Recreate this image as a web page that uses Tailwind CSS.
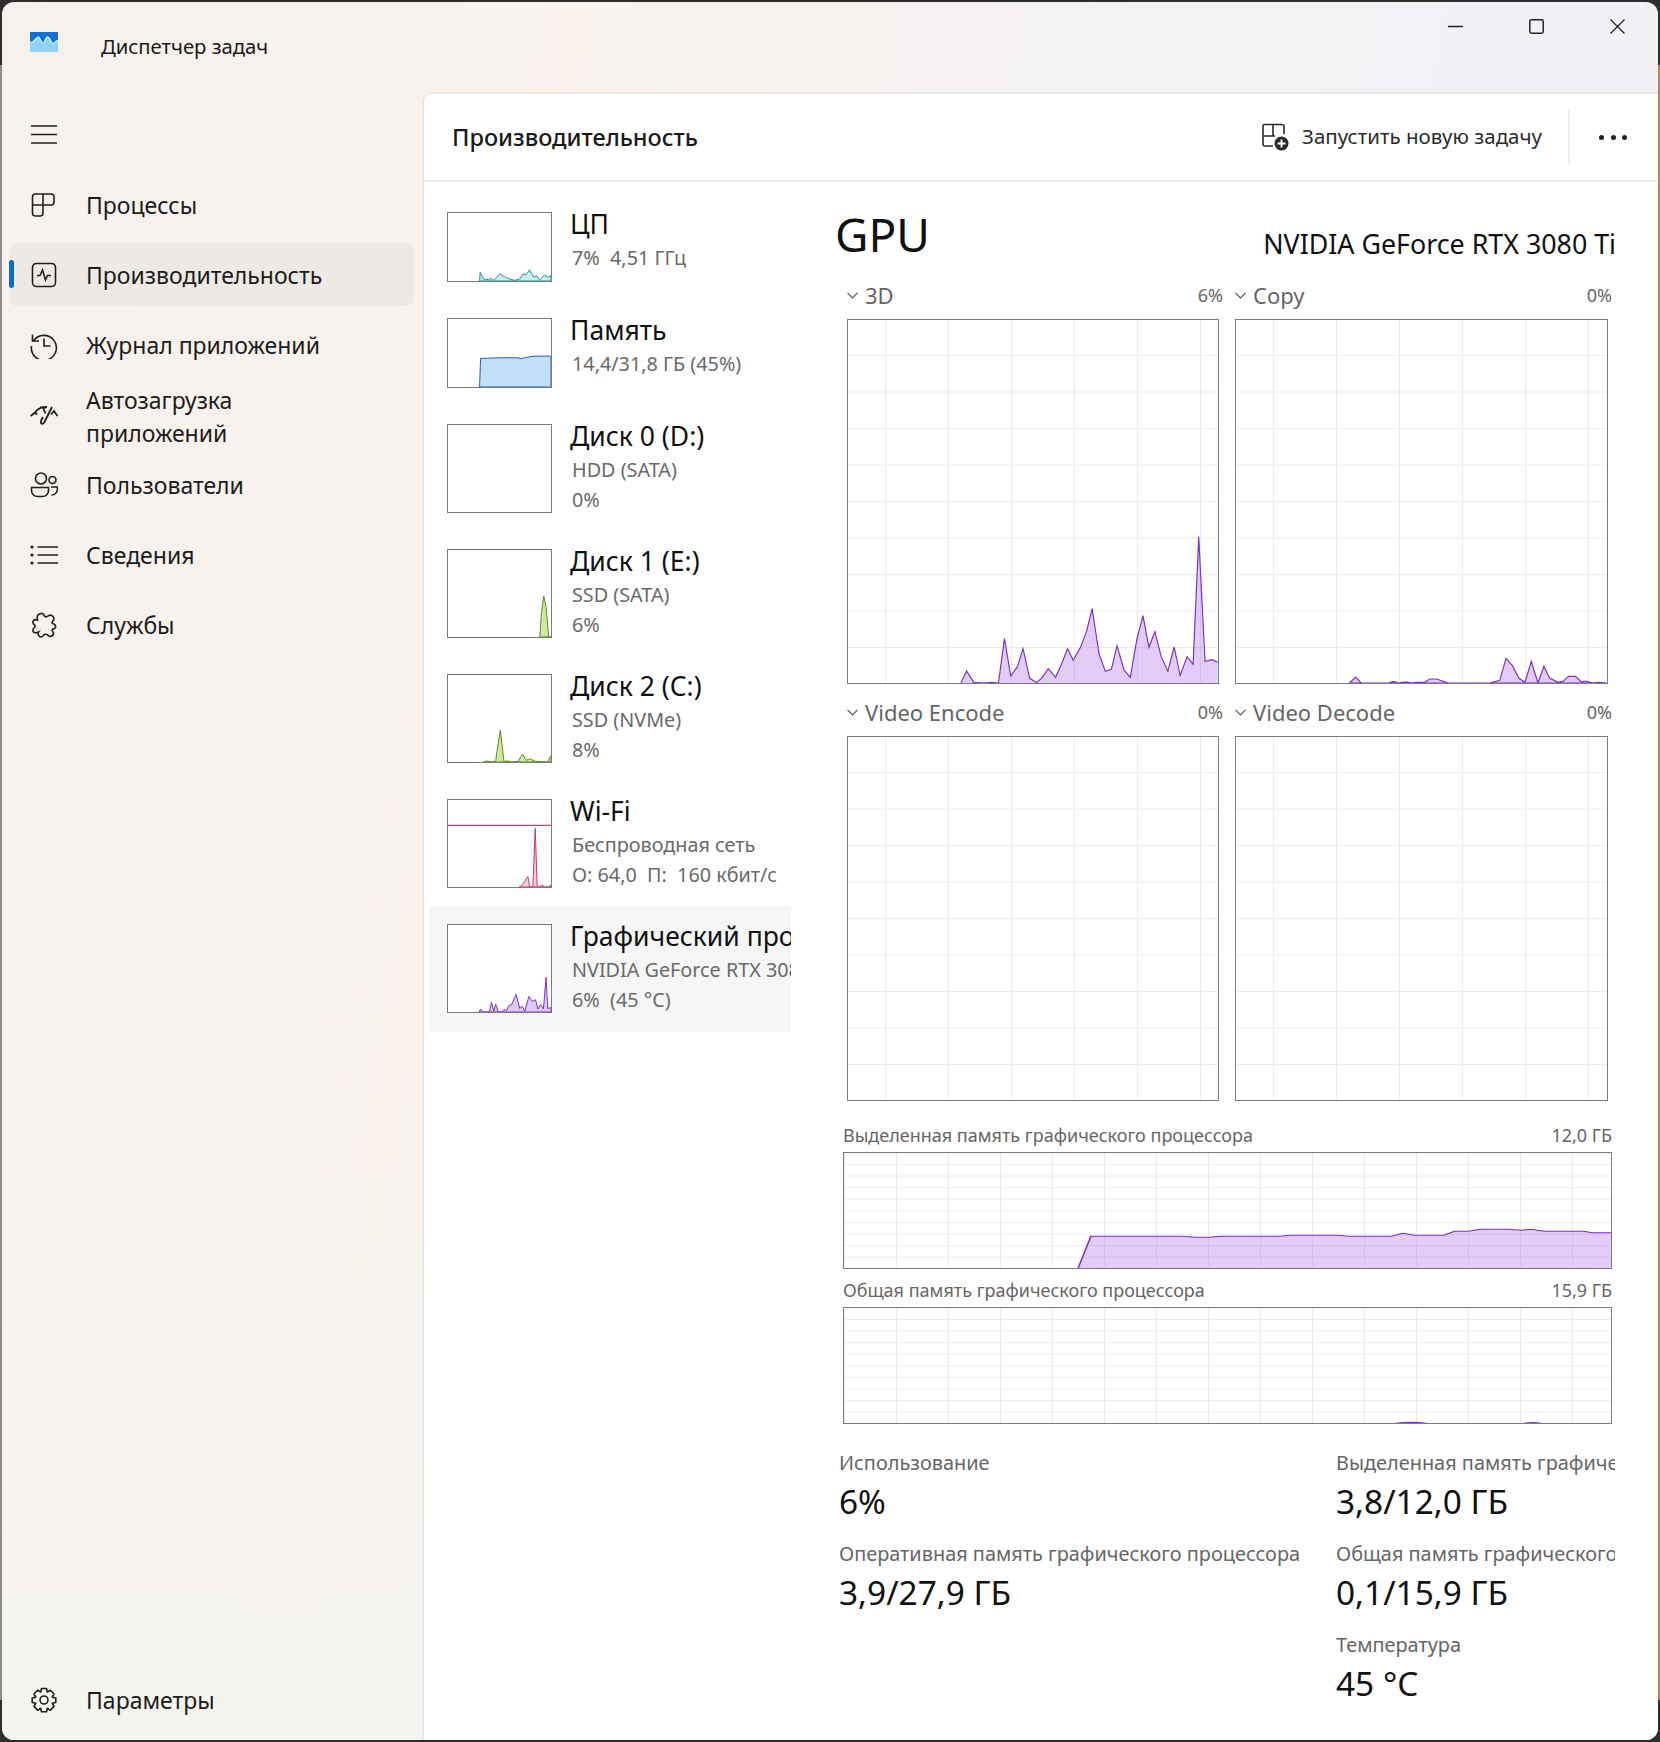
<!DOCTYPE html>
<html lang="ru">
<head>
  <meta charset="UTF-8" />
  <title>Диспетчер задач</title>
  <script src="https://cdn.jsdelivr.net/npm/@tailwindcss/browser@4"></script>
</head>
<body class="w-[1660px] h-[1742px] overflow-hidden bg-[linear-gradient(#2e2e2e_65px,transparent_65px,transparent_1700px,#2e2e2e_1700px),linear-gradient(90deg,#8f8d8b_50%,#b5834f_50%)] font-['Noto_Sans','Open_Sans',sans-serif]">

<div class="m-[2px] w-[1656px] h-[1738px] rounded-[12px] overflow-hidden flex flex-col bg-[linear-gradient(100deg,#f7f1ee_0%,#f9f2ed_30%,#f3f1f3_60%,#eff0f7_100%)]">

  <!-- Title bar -->
  <div class="h-[90px] shrink-0 flex items-start relative">
    <svg class="mt-[30px] ml-[28px] w-[28px] h-[20px]" viewBox="0 0 28 20">
      <rect width="28" height="20" fill="#8fd3f7"/>
      <path d="M0 0H28V9C26 7 24.500 13 22 11C20 8 19 4 17 5C15 6 15 11 13 11C11 11 10 4 8 5C5 6 3 12 0 10Z" fill="#0f6fd6"/>
      <path d="M0 10C3 12 5 6 8 5C10 4 11 11 13 11C15 11 15 6 17 5C19 4 20 8 22 11C24.500 13 26 7 28 9" fill="none" stroke="#d8f0ff" stroke-width="1.200"/>
    </svg>
    <span class="ml-[43px] mt-[30px] text-[20.25px] leading-[28px] text-[#1a1a1a]">Диспетчер задач</span>
    <div class="ml-auto flex items-center gap-[66px] mt-[17px] mr-[33px]">
      <svg class="w-[15px] h-[15px]" viewBox="0 0 15 15"><path d="M0 7.500H15" stroke="#222" stroke-width="1.300"/></svg>
      <svg class="w-[15px] h-[15px]" viewBox="0 0 15 15"><rect x="0.800" y="0.800" width="13.400" height="13.400" rx="1.600" fill="none" stroke="#222" stroke-width="1.500"/></svg>
      <svg class="w-[15px] h-[15px]" viewBox="0 0 15 15"><path d="M0.500 0.500L14.500 14.500M14.500 0.500L0.500 14.500" stroke="#222" stroke-width="1.300"/></svg>
    </div>
  </div>

  <div class="flex-1 flex min-h-0">

    <!-- Sidebar -->
    <aside class="w-[420px] shrink-0 flex flex-col text-[#1c1c1c] text-[23px] bg-[linear-gradient(180deg,transparent_65%,#f5f4ee)]">
      <div class="h-[78px] pt-[6px] flex items-center pl-[29px]">
        <svg class="w-[26px] h-[20px]" viewBox="0 0 26 20"><path d="M0 2H26M0 10.500H26M0 19H26" stroke="#222" stroke-width="1.500"/></svg>
      </div>

      <a class="h-[70px] flex items-center pl-[28px] gap-[28px]">
        <svg class="w-[28px] h-[28px] shrink-0" viewBox="0 0 28 28" fill="none" stroke="#1f1f1f" stroke-width="1.600"><path d="M2.500 14H13V3H5.500Q2.500 3 2.500 6V22Q2.500 25 5.500 25H10Q13 25 13 22V3M13 14H21Q24 14 24 11V6Q24 3 21 3H13"/></svg>
        <span>Процессы</span>
      </a>

      <a class="relative ml-[7px] mr-[8px] h-[70px] flex items-center pl-[21px] gap-[28px]">
        <span class="absolute inset-x-0 top-[3px] h-[63px] rounded-[8px] bg-[#efe9e6]"></span>
        <span class="absolute left-0 top-[20px] w-[5px] h-[28px] rounded-full bg-[#0f6cbd]"></span>
        <svg class="relative w-[28px] h-[28px] shrink-0" viewBox="0 0 28 28" fill="none" stroke="#1f1f1f" stroke-width="1.600"><rect x="2.500" y="2.500" width="23" height="23" rx="4"/><path d="M7 14.500H10L12.500 9L15.500 19L17.500 14.500H21"/></svg>
        <span class="relative">Производительность</span>
      </a>

      <a class="h-[70px] flex items-center pl-[28px] gap-[28px]">
        <svg class="w-[28px] h-[28px] shrink-0" viewBox="0 0 28 28" fill="none" stroke="#1f1f1f" stroke-width="1.600"><path d="M2.500 3.500V10H9"/><path d="M3.400 10A12.500 12.500 0 1 1 1.500 15"/><path d="M14 7.500V15H20.500"/></svg>
        <span>Журнал приложений</span>
      </a>

      <a class="h-[70px] flex items-center pl-[28px] gap-[28px]">
        <svg class="w-[28px] h-[28px] shrink-0" viewBox="0 0 28 28" fill="none" stroke="#1f1f1f" stroke-width="1.800"><path d="M0.700 15L5 11.500L7 13.500M5 11.500A14 14 0 0 1 17 6M10 6.500H16M13 6.500L15.500 12.500"/><path d="M22 6L14.500 21Q12.500 24 11 22Q10.500 20 13 16"/><path d="M21 13.500L24 10L27.500 15"/></svg>
        <span class="mt-[4px] leading-[33px]">Автозагрузка<br>приложений</span>
      </a>

      <a class="h-[70px] flex items-center pl-[28px] gap-[28px]">
        <svg class="w-[28px] h-[28px] shrink-0" viewBox="0 0 28 28" fill="none" stroke="#1f1f1f" stroke-width="1.600"><circle cx="11" cy="7.500" r="5.500"/><circle cx="22.500" cy="9" r="3.500"/><path d="M1.500 16.500H18.500V19.500A6 6 0 0 1 12.500 25.500H7.500A6 6 0 0 1 1.500 19.500Z"/><path d="M21 16H27.500V18A6 6 0 0 1 21.500 24"/></svg>
        <span>Пользователи</span>
      </a>

      <a class="h-[70px] flex items-center pl-[28px] gap-[28px]">
        <svg class="w-[28px] h-[28px] shrink-0" viewBox="0 0 28 28" fill="none" stroke="#1f1f1f" stroke-width="1.600"><path d="M7.500 6H28M7.500 14H28M7.500 22H28"/><g fill="#1f1f1f" stroke="none"><circle cx="2" cy="6" r="1.600"/><circle cx="2" cy="14" r="1.600"/><circle cx="2" cy="22" r="1.600"/></g></svg>
        <span>Сведения</span>
      </a>

      <a class="h-[70px] flex items-center pl-[28px] gap-[28px]">
        <svg class="w-[28px] h-[28px] shrink-0" viewBox="0 0 28 28" fill="none" stroke="#1f1f1f" stroke-width="1.600"><path d="M11 2.500Q13.500 2 14 4.500Q15.500 7 18 5Q21 3 23 5.500Q25 8 22.500 10.500Q21 12.500 24 13Q26 14 25.500 16.500Q24.500 18.500 22.500 18Q21.500 20 23.500 22Q23.500 25 20.500 25.500Q18.500 25.500 17 23.500Q14 22.500 13 25Q11 27 9 25Q7.500 22.500 8.500 21Q5.500 22.500 3.500 21Q2 18.500 4.500 16.500Q6 15 4 13.500Q2 11.500 3.500 9.500Q5.500 8 7.500 9Q6.500 5 8.500 3.500Z"/></svg>
        <span>Службы</span>
      </a>

      <a class="mt-auto mb-[5px] h-[70px] flex items-center pl-[28px] gap-[28px]">
        <svg class="w-[28px] h-[28px] shrink-0" viewBox="0 0 28 28" fill="none" stroke="#1f1f1f" stroke-width="1.600"><circle cx="14" cy="14" r="4"/><path d="M11.500 2.500H16.500L17.200 6L20.400 4.300L24 8L22.200 11.200L25.800 12V16.500L22.200 17.200L24 20.400L20.400 24.200L17.200 22.300L16.500 25.800H11.500L10.800 22.300L7.600 24.200L4 20.400L5.800 17.200L2.200 16.500V12L5.800 11.200L4 8L7.600 4.300L10.800 6Z" stroke-linejoin="round"/></svg>
        <span>Параметры</span>
      </a>
    </aside>

    <!-- Main panel -->
    <main class="flex-1 min-w-0 flex flex-col bg-white rounded-tl-[10px] border-l-2 border-t-2 border-[#e9e7e5]">

      <header class="h-[88px] shrink-0 flex items-center border-b-2 border-[#efefef]">
        <h1 class="ml-[28px] mt-[2px] text-[23.5px] font-medium text-[#1a1a1a]">Производительность</h1>
        <svg class="ml-auto w-[28px] h-[28px]" viewBox="0 0 28 28" fill="none" stroke="#2a2a2a" stroke-width="1.600"><path d="M14 13H2V3.500Q2 1.500 4 1.500H21Q23 1.500 23 3.500V11M12 1.500V13M2 13V21Q2 23 4 23H12"/><circle cx="20.500" cy="20.500" r="7" fill="#2b2b2b" stroke="none"/><path d="M20.500 16.500V24.500M16.500 20.500H24.500" stroke="#fff" stroke-width="1.800"/></svg>
        <span class="ml-[13px] -mt-[2px] text-[20.5px] text-[#2b2b2b]">Запустить новую задачу</span>
        <span class="ml-[26px] w-[2px] h-[54px] bg-[#eeeeee]"></span>
        <span class="ml-[29px] mr-[31px] flex gap-[6.5px]">
          <i class="w-[5px] h-[5px] rounded-full bg-[#222]"></i><i class="w-[5px] h-[5px] rounded-full bg-[#222]"></i><i class="w-[5px] h-[5px] rounded-full bg-[#222]"></i>
        </span>
      </header>

      <div class="flex-1 flex min-h-0">

        <!-- Resource list -->
        <nav class="w-[362px] ml-[5px] mt-[12px] shrink-0 overflow-hidden whitespace-nowrap text-[19.8px] leading-[30px] text-[#6a6a6a]">

          <div class="h-[106px] flex pt-[18px] pl-[18px]">
            <svg class="w-[105px] h-[70px] shrink-0 border-[1.5px] border-[#7c7c7c]" viewBox="52 67 313 207" preserveAspectRatio="none"><path d="M148 274L150 247L160 268L175 270L185 266L190 272L210 252L225 262L240 268L255 272L270 268L280 252L290 255L300 240L312 262L322 258L330 272L345 256L355 262L365 258V274Z" fill="#c9eef3" stroke="#2a8ea0" stroke-width="3"/></svg>
            <div class="ml-[18px] -mt-[5px]">
              <div class="h-[34px] mb-[2px] text-[26.5px] leading-[34px] text-[#111]">ЦП</div>
              <div class="ml-[2px]">7%&nbsp; 4,51 ГГц</div>
            </div>
          </div>

          <div class="h-[106px] flex pt-[18px] pl-[18px]">
            <svg class="w-[105px] h-[70px] shrink-0 border-[1.5px] border-[#7c7c7c]" viewBox="52 385 313 207" preserveAspectRatio="none"><path d="M148 592L151 505L210 503L265 503L272 506L300 500L315 498L365 498V592Z" fill="#c3dffc" stroke="#1a5fb4" stroke-width="3"/></svg>
            <div class="ml-[18px] -mt-[5px]">
              <div class="h-[34px] mb-[2px] text-[26.5px] leading-[34px] text-[#111]">Память</div>
              <div class="ml-[2px]">14,4/31,8 ГБ (45%)</div>
            </div>
          </div>

          <div class="h-[125px] flex pt-[18px] pl-[18px]">
            <div class="w-[105px] h-[89px] shrink-0 border-[1.5px] border-[#7c7c7c]"></div>
            <div class="ml-[18px] -mt-[5px]">
              <div class="h-[34px] mb-[2px] text-[26.5px] leading-[34px] text-[#111]">Диск 0 (D:)</div>
              <div class="ml-[2px]">HDD (SATA)</div>
              <div class="ml-[2px]">0%</div>
            </div>
          </div>

          <div class="h-[125px] flex pt-[18px] pl-[18px]">
            <svg class="w-[105px] h-[89px] shrink-0 border-[1.5px] border-[#7c7c7c]" viewBox="52 58 313 264" preserveAspectRatio="none"><path d="M331 322L336 250L343 198L350 230L358 322H365V322Z" fill="#cfe9a5" stroke="#5c8a1f" stroke-width="3"/></svg>
            <div class="ml-[18px] -mt-[5px]">
              <div class="h-[34px] mb-[2px] text-[26.5px] leading-[34px] text-[#111]">Диск 1 (E:)</div>
              <div class="ml-[2px]">SSD (SATA)</div>
              <div class="ml-[2px]">6%</div>
            </div>
          </div>

          <div class="h-[125px] flex pt-[18px] pl-[18px]">
            <svg class="w-[105px] h-[89px] shrink-0 border-[1.5px] border-[#7c7c7c]" viewBox="52 73 313 264" preserveAspectRatio="none"><path d="M160 337L170 334L185 337L197 335L200 310L211 240L222 335L235 334L245 337L265 335L279 313L290 332L300 327L318 335L355 337L365 318V337Z" fill="#cfe9a5" stroke="#5c8a1f" stroke-width="3"/></svg>
            <div class="ml-[18px] -mt-[5px]">
              <div class="h-[34px] mb-[2px] text-[26.5px] leading-[34px] text-[#111]">Диск 2 (C:)</div>
              <div class="ml-[2px]">SSD (NVMe)</div>
              <div class="ml-[2px]">8%</div>
            </div>
          </div>

          <div class="h-[125px] flex pt-[18px] pl-[18px]">
            <svg class="w-[105px] h-[89px] shrink-0 border-[1.5px] border-[#7c7c7c]" viewBox="52 449 313 263" preserveAspectRatio="none"><path d="M52 525.500H365" stroke="#a3195b" stroke-width="3"/><path d="M268 712L275 708L285 695L295 680L300 712L310 712L317 535L323 712L332 712L337 706L345 712L358 712L365 706V712Z" fill="#f9c9da" stroke="#c8336e" stroke-width="3"/></svg>
            <div class="ml-[18px] -mt-[5px]">
              <div class="h-[34px] mb-[2px] text-[26.5px] leading-[34px] text-[#111]">Wi-Fi</div>
              <div class="ml-[2px]">Беспроводная сеть</div>
              <div class="ml-[2px]">О: 64,0&nbsp; П:&nbsp; 160 кбит/с</div>
            </div>
          </div>

          <div class="h-[126px] flex pt-[18px] pl-[18px] bg-[#f6f6f6]">
            <svg class="w-[105px] h-[89px] shrink-0 border-[1.5px] border-[#7c7c7c] bg-white" viewBox="52 824 313 263" preserveAspectRatio="none"><path d="M147 1087L151 1078L158 1087L178 1087L184 1058L191 1084L197 1064L205 1087L215 1087L222 1080L230 1082L238 1067L245 1065L259 1034L270 1076L278 1070L285 1085L298 1040L308 1055L318 1050L325 1078L333 1065L342 1078L350 982L355 1076L365 1074V1087Z" fill="#e0caf9" stroke="#7a2fc9" stroke-width="3"/></svg>
            <div class="ml-[18px] -mt-[5px]">
              <div class="h-[34px] mb-[2px] text-[26.5px] leading-[34px] text-[#111]">Графический процессор 0</div>
              <div class="ml-[2px]">NVIDIA GeForce RTX 3080 Ti</div>
              <div class="ml-[2px]">6%&nbsp; (45 °C)</div>
            </div>
          </div>
        </nav>

        <!-- GPU details -->
        <section class="flex-1 min-w-0 pl-[44px] pr-[43px] pt-[23px]">
          <div class="h-[60px] flex items-end justify-between">
            <h2 class="text-[46px] leading-[60px] mb-[1px] text-[#111]">GPU</h2>
            <span class="text-[26.8px] leading-[34px] mb-[4px] -mr-[1px] text-[#111]">NVIDIA GeForce RTX 3080 Ti</span>
          </div>

          <div class="mt-[17px] ml-[12px] grid grid-cols-[372px_373px] gap-x-[16px] gap-y-[15px] text-[#666]">

            <div>
              <div class="h-[27px] mb-[10px] -mr-[4px] flex items-center">
                <svg class="w-[11px] h-[7px]" viewBox="0 0 11 7" fill="none" stroke="#555" stroke-width="1.200"><path d="M0.500 0.800L5.500 5.800L10.500 0.800"/></svg>
                <span class="ml-[7px] text-[22px]">3D</span>
                <span class="ml-auto text-[18px]">6%</span>
              </div>
              <div class="h-[365px] border-[1.5px] border-[#7c7c7c] bg-[linear-gradient(#ebebeb_1px,transparent_1px),linear-gradient(90deg,#ebebeb_1px,transparent_1px)] bg-[size:63px_36.5px] bg-[position:37px_35px]">
                <svg class="w-full h-full" viewBox="52 -540 1114 1089" preserveAspectRatio="none"><path d="M392 549L409 513L431 547L460 549L485 547L505 549L523 416L542 528L562 500L579 446L599 535L620 548L637 532L655 506L677 532L695 492L713 446L730 481L752 442L770 395L787 326L808 462L827 514L845 508L862 437L883 510L902 532L921 421L940 347L958 442L976 395L995 470L1015 514L1034 441L1052 526L1073 470L1091 493L1108 110L1127 484L1148 479L1165 487V549Z" fill="#9333ea" fill-opacity=".25" stroke="none"/><path d="M392 549L409 513L431 547L460 549L485 547L505 549L523 416L542 528L562 500L579 446L599 535L620 548L637 532L655 506L677 532L695 492L713 446L730 481L752 442L770 395L787 326L808 462L827 514L845 508L862 437L883 510L902 532L921 421L940 347L958 442L976 395L995 470L1015 514L1034 441L1052 526L1073 470L1091 493L1108 110L1127 484L1148 479L1165 487" fill="none" stroke="#7a2fc9" stroke-width="3.500"/></svg>
              </div>
            </div>

            <div>
              <div class="h-[27px] mb-[10px] -mr-[4px] flex items-center">
                <svg class="w-[11px] h-[7px]" viewBox="0 0 11 7" fill="none" stroke="#555" stroke-width="1.200"><path d="M0.500 0.800L5.500 5.800L10.500 0.800"/></svg>
                <span class="ml-[7px] text-[22px]">Copy</span>
                <span class="ml-auto text-[18px]">0%</span>
              </div>
              <div class="h-[365px] border-[1.5px] border-[#7c7c7c] bg-[linear-gradient(#ebebeb_1px,transparent_1px),linear-gradient(90deg,#ebebeb_1px,transparent_1px)] bg-[size:63px_36.5px] bg-[position:37px_35px]">
                <svg class="w-full h-full" viewBox="16 -720 1117 1090" preserveAspectRatio="none"><path d="M358 370L376 352L393 370L475 370L490 365L505 370L515 368L530 367L545 370L560 368L585 367L600 358L620 358L655 370L780 370L810 362L829 296L848 318L868 356L886 368L905 305L925 370L943 320L960 355L985 368L1000 365L1018 350L1038 350L1056 367L1070 364L1090 370L1110 368L1132 370Z" fill="#9333ea" fill-opacity=".25" stroke="#7a2fc9" stroke-width="3.500"/></svg>
              </div>
            </div>

            <div>
              <div class="h-[27px] mb-[10px] -mr-[4px] flex items-center">
                <svg class="w-[11px] h-[7px]" viewBox="0 0 11 7" fill="none" stroke="#555" stroke-width="1.200"><path d="M0.500 0.800L5.500 5.800L10.500 0.800"/></svg>
                <span class="ml-[7px] text-[22px]">Video Encode</span>
                <span class="ml-auto text-[18px]">0%</span>
              </div>
              <div class="h-[365px] border-[1.5px] border-[#7c7c7c] bg-[linear-gradient(#ebebeb_1px,transparent_1px),linear-gradient(90deg,#ebebeb_1px,transparent_1px)] bg-[size:63px_36.5px] bg-[position:37px_35px]"></div>
            </div>

            <div>
              <div class="h-[27px] mb-[10px] -mr-[4px] flex items-center">
                <svg class="w-[11px] h-[7px]" viewBox="0 0 11 7" fill="none" stroke="#555" stroke-width="1.200"><path d="M0.500 0.800L5.500 5.800L10.500 0.800"/></svg>
                <span class="ml-[7px] text-[22px]">Video Decode</span>
                <span class="ml-auto text-[18px]">0%</span>
              </div>
              <div class="h-[365px] border-[1.5px] border-[#7c7c7c] bg-[linear-gradient(#ebebeb_1px,transparent_1px),linear-gradient(90deg,#ebebeb_1px,transparent_1px)] bg-[size:63px_36.5px] bg-[position:37px_35px]"></div>
            </div>
          </div>

          <!-- Memory charts -->
          <div class="ml-[8px] w-[769px] mt-[20px] text-[#666] text-[18px]">
            <div class="h-[28px] mb-[3px] flex items-center justify-between"><span>Выделенная память графического процессора</span><span>12,0 ГБ</span></div>
            <div class="h-[117px] border-[1.5px] border-[#7c7c7c] bg-[linear-gradient(#ebebeb_1px,transparent_1px),linear-gradient(90deg,#ebebeb_1px,transparent_1px)] bg-[size:52px_11.6px] bg-[position:52px_11px]">
              <svg class="w-full h-full" viewBox="25 97 1451 348" preserveAspectRatio="none"><path d="M468 445L492 349L665 349L690 352L715 352L740 349L850 349L870 346L960 346L980 349L1060 349L1082 340L1105 346L1160 346L1180 334L1205 334L1230 328L1280 328L1305 331L1325 328L1350 334L1425 334L1440 338L1476 338V445Z" fill="#9333ea" fill-opacity=".25"/><path d="M468 445L492 349L665 349L690 352L715 352L740 349L850 349L870 346L960 346L980 349L1060 349L1082 340L1105 346L1160 346L1180 334L1205 334L1230 328L1280 328L1305 331L1325 328L1350 334L1425 334L1440 338L1476 338" fill="none" stroke="#7a2fc9" stroke-width="3"/></svg>
            </div>
            <div class="h-[28px] mt-[7px] mb-[3px] flex items-center justify-between"><span>Общая память графического процессора</span><span>15,9 ГБ</span></div>
            <div class="h-[117px] border-[1.5px] border-[#7c7c7c] bg-[linear-gradient(#ebebeb_1px,transparent_1px),linear-gradient(90deg,#ebebeb_1px,transparent_1px)] bg-[size:52px_11.6px] bg-[position:52px_11px]">
              <svg class="w-full h-full" viewBox="25 562 1451 348" preserveAspectRatio="none"><path d="M1065 910Q1097 903 1130 910ZM1310 910Q1328 904 1346 910Z" fill="#7a2fc9"/></svg>
            </div>
          </div>

          <!-- Stats -->
          <div class="ml-[4px] mt-[24px] grid grid-cols-[497px_279px] gap-y-[14px] whitespace-nowrap">
            <div class="overflow-hidden">
              <div class="h-[30px] mb-[1px] text-[19.9px] leading-[30px] text-[#666]">Использование</div>
              <div class="h-[46px] text-[33.4px] leading-[45px] text-[#111]">6%</div>
            </div>
            <div class="overflow-hidden">
              <div class="h-[30px] mb-[1px] text-[19.9px] leading-[30px] text-[#666]">Выделенная память графического процессора</div>
              <div class="h-[46px] text-[33.4px] leading-[45px] text-[#111]">3,8/12,0 ГБ</div>
            </div>
            <div class="overflow-hidden">
              <div class="h-[30px] mb-[1px] text-[19.9px] leading-[30px] text-[#666]">Оперативная память графического процессора</div>
              <div class="h-[46px] text-[33.4px] leading-[45px] text-[#111]">3,9/27,9 ГБ</div>
            </div>
            <div class="overflow-hidden">
              <div class="h-[30px] mb-[1px] text-[19.9px] leading-[30px] text-[#666]">Общая память графического процессора</div>
              <div class="h-[46px] text-[33.4px] leading-[45px] text-[#111]">0,1/15,9 ГБ</div>
            </div>
            <div class="col-start-2">
              <div class="h-[30px] mb-[1px] text-[19.9px] leading-[30px] text-[#666]">Температура</div>
              <div class="h-[46px] text-[33.4px] leading-[45px] text-[#111]">45 °C</div>
            </div>
          </div>
        </section>
      </div>
    </main>
  </div>
</div>
</body>
</html>
